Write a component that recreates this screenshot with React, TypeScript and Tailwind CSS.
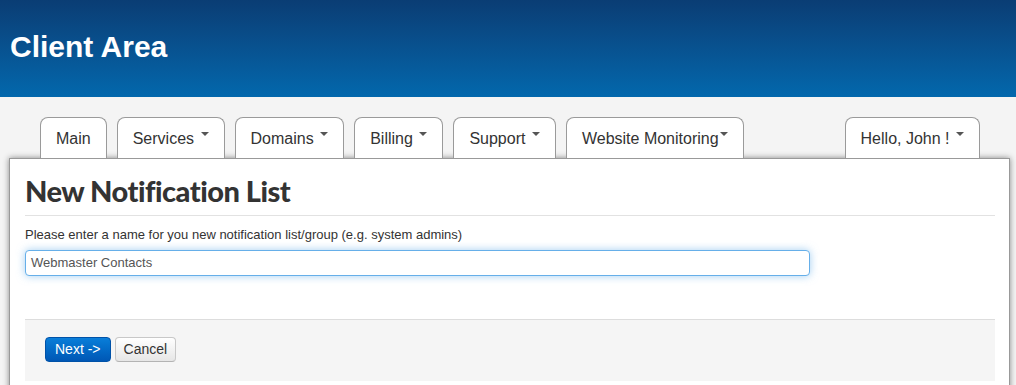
import React from "react";

const Caret = ({ tight }: { tight?: boolean }) => (
  <span
    className={`inline-block align-top mt-[3px] w-0 h-0 border-t-[4px] border-t-[#555] border-x-[4px] border-x-transparent ${
      tight ? "ml-[1.5px]" : "ml-[6.5px]"
    }`}
  />
);

const Tab = ({
  label,
  caret,
  tight,
  className = "",
}: {
  label: string;
  caret?: boolean;
  tight?: boolean;
  className?: string;
}) => (
  <div
    className={`h-[41px] px-[15px] pt-[11px] bg-white border border-b-0 border-[#9a9a9a] rounded-t-[8px] text-[16px] leading-[20px] text-[#333] whitespace-nowrap ${className}`}
  >
    <span>{label}</span>
    {caret && <Caret tight={tight} />}
  </div>
);

export default function App() {
  return (
    <div
      className="w-[1016px] h-[385px] overflow-hidden bg-[#f4f4f4]"
      style={{ fontFamily: '"Liberation Sans", Arial, sans-serif' }}
    >
      <header className="h-[97px] bg-gradient-to-b from-[#0a3d74] to-[#0268ad] pl-[10px] pt-[30px]">
        <h1 className="text-white font-bold text-[30px] leading-[34px]">Client Area</h1>
      </header>

      <div className="pt-[20px]">
        <div className="flex items-end gap-[10px] ml-[40px] mr-[36px]">
          <Tab label="Main" />
          <Tab label="Services" caret />
          <Tab label="Domains" caret />
          <Tab label="Billing" caret />
          <Tab label="Support" caret />
          <Tab label="Website Monitoring" caret tight />
          <Tab label="Hello, John !" caret className="ml-auto" />
        </div>

        <div className="ml-[9px] mr-[6px] bg-white border border-[#999] shadow-[0_0_6px_rgba(0,0,0,0.45)] pl-[15px] pr-[14px] pb-[10px]">
          <h2
            className="pt-[15px] mb-[7px] text-[29px] leading-[34px] font-black text-[#333] tracking-[-0.5px]"
            style={{ fontFamily: 'Lato, "Open Sans", sans-serif' }}
          >
            New Notification List
          </h2>
          <div className="h-px bg-[#e2e2e2]" />
          <label className="block mt-[11px] mb-[7px] text-[13px] leading-[16px] text-[#333]">
            Please enter a name for you new notification list/group (e.g. system admins)
          </label>
          <div className="w-[785px] h-[26px] border border-[#66afe9] rounded-[4px] shadow-[0_0_8px_rgba(102,175,233,0.6)] pl-[5px] flex items-center text-[13px] text-[#555] bg-white">
            Webmaster Contacts
          </div>
          <div className="mt-[43px] bg-[#f5f5f5] border-t border-[#ddd] pt-[17px] pb-[19px] pl-[20px] flex gap-[4px]">
            <button className="h-[25px] px-[9px] rounded-[4px] border border-[#0052a8] bg-gradient-to-b from-[#0a7ed9] to-[#0057b5] text-white text-[14px] leading-[23px]">
              Next -&gt;
            </button>
            <button className="h-[25px] px-[8px] rounded-[4px] border border-[#c8c8c8] border-b-[#b3b3b3] bg-gradient-to-b from-white to-[#e6e6e6] text-[#333] text-[14px] leading-[23px]">
              Cancel
            </button>
          </div>
        </div>
      </div>
    </div>
  );
}
